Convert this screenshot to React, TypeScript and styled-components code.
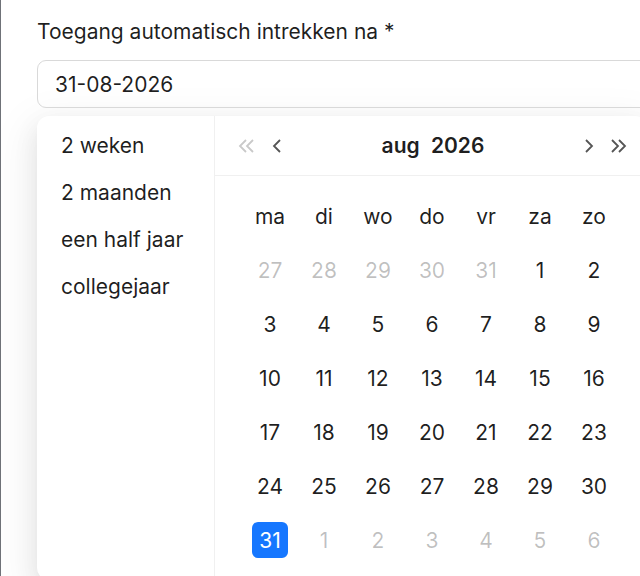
import styled, { createGlobalStyle } from 'styled-components';

const GlobalStyle = createGlobalStyle`
  html, body {
    margin: 0;
    padding: 0;
    background: #fff;
    overflow: hidden;
  }
  body {
    font-family: Inter, "Noto Sans", "Liberation Sans", sans-serif;
    color: rgba(0, 0, 0, 0.88);
  }
`;

const Page = styled.div`
  position: relative;
  box-sizing: border-box;
  width: 640px;
  height: 576px;
  overflow: hidden;
  border-left: 1px solid #6f7278;
  padding-left: 36px;
  &::before {
    content: '';
    position: absolute;
    left: -1px;
    top: 0;
    width: 1px;
    height: 22px;
    background: #4b6d94;
  }
`;

const Field = styled.div`
  padding-top: 15px;
  display: flex;
  flex-direction: column;
`;

const Label = styled.label`
  font-size: 21px;
  line-height: 33px;
  padding-bottom: 12px;
  color: rgba(0, 0, 0, 0.88);
`;

const Input = styled.div`
  box-sizing: border-box;
  width: 700px;
  height: 48px;
  border: 1px solid #d9d9d9;
  border-radius: 9px;
  padding: 0 17px;
  display: flex;
  align-items: center;
  font-size: 21px;
  color: rgba(0, 0, 0, 0.88);
`;

const Popup = styled.div`
  margin-top: 8px;
  width: 610px;
  height: 464px;
  display: flex;
  background: #fff;
  border-radius: 12px;
  box-shadow: 0 9px 24px 0 rgba(0, 0, 0, 0.08), 0 4px 9px -6px rgba(0, 0, 0, 0.12),
    0 13px 42px 12px rgba(0, 0, 0, 0.05);
`;

const Presets = styled.ul`
  box-sizing: border-box;
  width: 178px;
  margin: 0;
  padding: 6px 12px;
  list-style: none;
  border-right: 1px solid rgba(5, 5, 5, 0.06);
`;

const Preset = styled.li`
  height: 47px;
  line-height: 47px;
  padding: 0 12px;
  font-size: 21px;
  color: rgba(0, 0, 0, 0.88);
`;

const DatePanel = styled.div`
  width: 432px;
  display: flex;
  flex-direction: column;
`;

const Header = styled.div`
  height: 59px;
  display: flex;
  align-items: center;
  padding: 0 13px 0 17px;
  border-bottom: 1px solid rgba(5, 5, 5, 0.06);
`;

const NavButton = styled.span<{ $muted?: boolean }>`
  width: 30px;
  height: 30px;
  display: flex;
  align-items: center;
  justify-content: center;
  color: ${(p) => (p.$muted ? '#c9c9c9' : '#555')};
`;

const Title = styled.div`
  flex: 1;
  text-align: center;
  font-size: 21px;
  font-weight: 600;
  color: rgba(0, 0, 0, 0.88);
  word-spacing: 6px;
`;

const Body = styled.div`
  padding: 13px 28px 0;
  display: grid;
  grid-template-columns: repeat(7, 54px);
  grid-auto-rows: 54px;
`;

const WeekDay = styled.div`
  display: flex;
  align-items: center;
  justify-content: center;
  font-size: 21px;
  color: rgba(0, 0, 0, 0.88);
`;

const Cell = styled.div<{ $out?: boolean }>`
  display: flex;
  align-items: center;
  justify-content: center;
  font-size: 21px;
  color: ${(p) => (p.$out ? 'rgba(0, 0, 0, 0.25)' : 'rgba(0, 0, 0, 0.88)')};
`;

const Selected = styled.span`
  width: 36px;
  height: 36px;
  border-radius: 6px;
  background: #1677ff;
  color: #fff;
  display: flex;
  align-items: center;
  justify-content: center;
`;

const Chevron = ({ dir, double }: { dir: 'left' | 'right'; double?: boolean }) => {
  const single = dir === 'left' ? 'M8 1 L2 7 L8 13' : 'M2 1 L8 7 L2 13';
  const w = double ? 18 : 10;
  return (
    <svg width={w} height="14" viewBox={`0 0 ${w} 14`} fill="none" stroke="currentColor" strokeWidth="1.8">
      <path d={single} />
      {double && <path d={single} transform="translate(7 0)" />}
    </svg>
  );
};

const weekDays = ['ma', 'di', 'wo', 'do', 'vr', 'za', 'zo'];

const days: { n: number; out?: boolean; sel?: boolean }[] = [
  ...[27, 28, 29, 30, 31].map((n) => ({ n, out: true })),
  ...Array.from({ length: 31 }, (_, i) => ({ n: i + 1, sel: i === 30 })),
  ...[1, 2, 3, 4, 5, 6].map((n) => ({ n, out: true })),
];

export default function App() {
  return (
    <>
      <GlobalStyle />
      <Page>
        <Field>
          <Label>Toegang automatisch intrekken na *</Label>
          <Input>31-08-2026</Input>
        </Field>
        <Popup>
          <Presets>
            <Preset>2 weken</Preset>
            <Preset>2 maanden</Preset>
            <Preset>een half jaar</Preset>
            <Preset>collegejaar</Preset>
          </Presets>
          <DatePanel>
            <Header>
              <NavButton $muted>
                <Chevron dir="left" double />
              </NavButton>
              <NavButton>
                <Chevron dir="left" />
              </NavButton>
              <Title>aug 2026</Title>
              <NavButton>
                <Chevron dir="right" />
              </NavButton>
              <NavButton>
                <Chevron dir="right" double />
              </NavButton>
            </Header>
            <Body>
              {weekDays.map((d) => (
                <WeekDay key={d}>{d}</WeekDay>
              ))}
              {days.map((d, i) => (
                <Cell key={i} $out={d.out}>
                  {d.sel ? <Selected>{d.n}</Selected> : d.n}
                </Cell>
              ))}
            </Body>
          </DatePanel>
        </Popup>
      </Page>
    </>
  );
}
